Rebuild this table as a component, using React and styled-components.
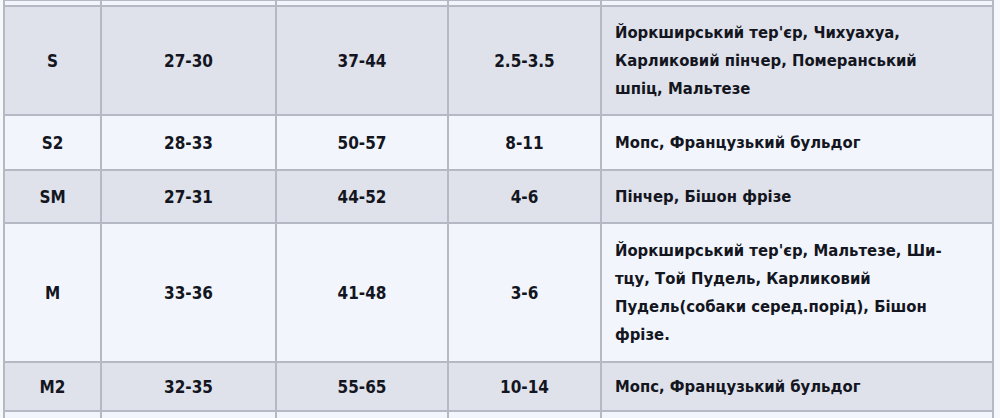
import React from "react";
import styled, { createGlobalStyle } from "styled-components";

const GlobalStyle = createGlobalStyle`
	html, body {
		margin: 0;
		padding: 0;
		background: #f7f8fb;
		overflow: hidden;
	}
`;

const rows = [
	{ size: "", chest: "", neck: "", weight: "", breeds: [], h: 6, shade: false },
	{
		size: "S",
		chest: "27-30",
		neck: "37-44",
		weight: "2.5-3.5",
		breeds: [
			"Йоркширський тер'єр, Чихуахуа,",
			"Карликовий пінчер, Померанський",
			"шпіц, Мальтезе",
		],
		h: 109,
		shade: true,
	},
	{ size: "S2", chest: "28-33", neck: "50-57", weight: "8-11", breeds: ["Мопс, Французький бульдог"], h: 55, shade: false },
	{ size: "SM", chest: "27-31", neck: "44-52", weight: "4-6", breeds: ["Пінчер, Бішон фрізе"], h: 53, shade: true },
	{
		size: "M",
		chest: "33-36",
		neck: "41-48",
		weight: "3-6",
		breeds: [
			"Йоркширський тер'єр, Мальтезе, Ши-",
			"тцу, Той Пудель, Карликовий",
			"Пудель(собаки серед.порід), Бішон",
			"фрізе.",
		],
		h: 139,
		shade: false,
	},
	{ size: "M2", chest: "32-35", neck: "55-65", weight: "10-14", breeds: ["Мопс, Французький бульдог"], h: 49, shade: true },
	{ size: "", chest: "", neck: "", weight: "", breeds: [], h: 20, shade: false },
];

function App() {
	return (
		<>
			<GlobalStyle />
			<Page>
				<Table>
					<colgroup>
						<col style={{ width: 97 }} />
						<col style={{ width: 175 }} />
						<col style={{ width: 172 }} />
						<col style={{ width: 153 }} />
						<col />
					</colgroup>
					<tbody>
						{rows.map((r, i) => (
							<Row key={i} $shade={r.shade} $h={r.h}>
								<Cell>{r.size}</Cell>
								<Cell>{r.chest}</Cell>
								<Cell>{r.neck}</Cell>
								<Cell>{r.weight}</Cell>
								<Breeds>
									{r.breeds.map((line, j) => (
										<div key={j}>{line}</div>
									))}
								</Breeds>
							</Row>
						))}
					</tbody>
				</Table>
			</Page>
		</>
	);
}
export default App;

const Page = styled.div`
	padding-left: 3px;
	margin-top: -1px;
`;

const Table = styled.table`
	width: 991px;
	table-layout: fixed;
	border-collapse: collapse;
	font-family: "DejaVu Sans Condensed", "DejaVu Sans", sans-serif;
	font-weight: bold;
	color: #131521;
`;

const Row = styled.tr`
	height: ${(p) => p.$h}px;
	background: ${(p) => (p.$shade ? "#dfe2ea" : "#f2f5fb")};
`;

const Cell = styled.td`
	border: 2px solid #b5b9c3;
	text-align: center;
	vertical-align: middle;
	font-size: 17px;
	padding: 0;
`;

const Breeds = styled.td`
	border: 2px solid #b5b9c3;
	padding: 0 8px 0 13px;
	font-size: 16.5px;
	line-height: 28px;
	vertical-align: middle;
`;
